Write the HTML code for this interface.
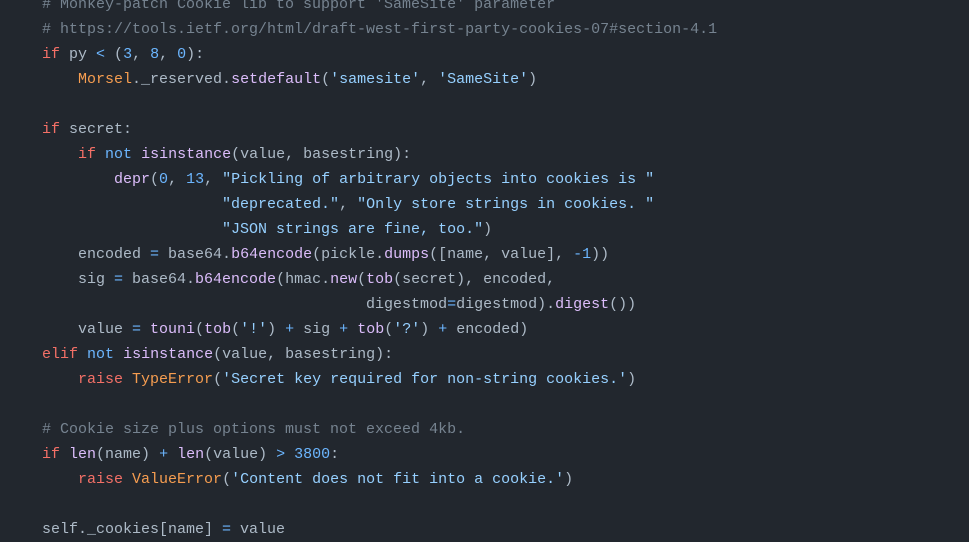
<!DOCTYPE html>
<html><head><style>
html,body{margin:0;background:#22272e;width:969px;height:533px;overflow:hidden}
pre{position:absolute;left:42px;top:-8px;margin:0;font-family:"Liberation Mono",monospace;font-size:15px;line-height:25px;color:#adbac7}
.k{color:#f47067}.b{color:#6cb6ff}.f{color:#dcbdfb}.s{color:#96d0ff}.c{color:#768390}.o{color:#f69d50}
</style></head><body><pre><span class="c"># Monkey-patch Cookie lib to support 'SameSite' parameter</span>
<span class="c"># https://tools.ietf.org/html/draft-west-first-party-cookies-07#section-4.1</span>
<span class="k">if</span> py <span class="b">&lt;</span> (<span class="b">3</span>, <span class="b">8</span>, <span class="b">0</span>):
    <span class="o">Morsel</span>._reserved.<span class="f">setdefault</span>(<span class="s">'samesite'</span>, <span class="s">'SameSite'</span>)

<span class="k">if</span> secret:
    <span class="k">if</span> <span class="b">not</span> <span class="f">isinstance</span>(value, basestring):
        <span class="f">depr</span>(<span class="b">0</span>, <span class="b">13</span>, <span class="s">"Pickling of arbitrary objects into cookies is "</span>
                    <span class="s">"deprecated."</span>, <span class="s">"Only store strings in cookies. "</span>
                    <span class="s">"JSON strings are fine, too."</span>)
    encoded <span class="b">=</span> base64.<span class="f">b64encode</span>(pickle.<span class="f">dumps</span>([name, value], <span class="b">-1</span>))
    sig <span class="b">=</span> base64.<span class="f">b64encode</span>(hmac.<span class="f">new</span>(<span class="f">tob</span>(secret), encoded,
                                    digestmod<span class="b">=</span>digestmod).<span class="f">digest</span>())
    value <span class="b">=</span> <span class="f">touni</span>(<span class="f">tob</span>(<span class="s">'!'</span>) <span class="b">+</span> sig <span class="b">+</span> <span class="f">tob</span>(<span class="s">'?'</span>) <span class="b">+</span> encoded)
<span class="k">elif</span> <span class="b">not</span> <span class="f">isinstance</span>(value, basestring):
    <span class="k">raise</span> <span class="o">TypeError</span>(<span class="s">'Secret key required for non-string cookies.'</span>)

<span class="c"># Cookie size plus options must not exceed 4kb.</span>
<span class="k">if</span> <span class="f">len</span>(name) <span class="b">+</span> <span class="f">len</span>(value) <span class="b">&gt;</span> <span class="b">3800</span>:
    <span class="k">raise</span> <span class="o">ValueError</span>(<span class="s">'Content does not fit into a cookie.'</span>)

self._cookies[name] <span class="b">=</span> value
</pre></body></html>
